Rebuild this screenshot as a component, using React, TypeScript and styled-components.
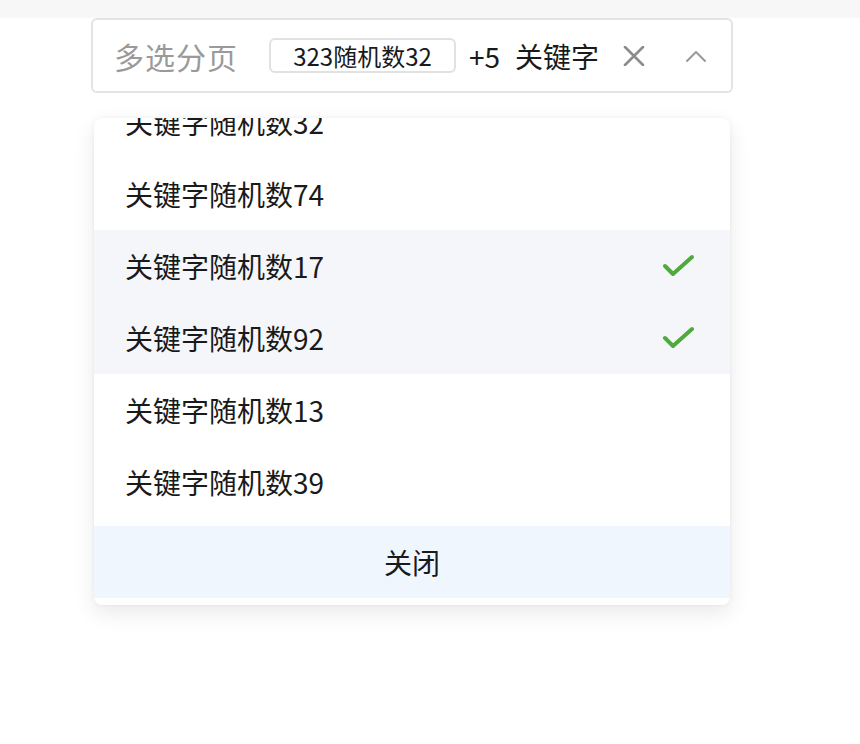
import { useEffect, useRef } from "react";
import styled, { createGlobalStyle } from "styled-components";

const GlobalStyle = createGlobalStyle`
  html, body {
    margin: 0;
    padding: 0;
    background: #ffffff;
    font-family: "Noto Sans CJK SC", "Noto Sans", sans-serif;
    color: #222;
  }
`;

const TopBand = styled.div`
  height: 18px;
  background: #f7f7f7;
`;

const Page = styled.div`
  padding: 0 0 0 91px;
  height: 726px;
`;

const SelectWrap = styled.div`
  position: relative;
  width: 642px;
`;

const SelectBox = styled.div`
  box-sizing: border-box;
  height: 75px;
  border: 2px solid #e3e3e3;
  border-radius: 6px;
  display: flex;
  align-items: center;
  padding: 0 24px 0 21px;
  background: #fff;
`;

const Placeholder = styled.span`
  font-size: 30px;
  color: #9a9a9a;
  letter-spacing: 1px;
  margin-right: 31px;
  white-space: nowrap;
`;

const Tag = styled.span`
  box-sizing: border-box;
  height: 35px;
  width: 187px;
  display: flex;
  align-items: center;
  justify-content: center;
  border: 2px solid #e1e1e1;
  border-radius: 6px;
  font-size: 24px;
  color: #1a1a1a;
  white-space: nowrap;
  margin-right: 13px;
`;

const Count = styled.span`
  font-size: 28px;
  color: #1a1a1a;
  margin-right: 15px;
  white-space: nowrap;
`;

const SearchText = styled.span`
  font-size: 28px;
  color: #1a1a1a;
  white-space: nowrap;
  flex: 1;
`;

const IconBtn = styled.span<{ $gap?: number }>`
  display: flex;
  align-items: center;
  justify-content: center;
  margin-left: ${(p) => p.$gap ?? 0}px;
`;

const Dropdown = styled.div`
  position: absolute;
  top: calc(100% + 25px);
  left: 3px;
  right: 3px;
  background: #fff;
  border-radius: 8px;
  box-shadow: 0 8px 22px rgba(0, 0, 0, 0.09), 0 0 4px rgba(0, 0, 0, 0.05);
  padding-bottom: 7px;
  overflow: hidden;
`;

const List = styled.div`
  height: 408px;
  overflow-y: auto;
  scrollbar-width: none;
  &::-webkit-scrollbar {
    display: none;
  }
`;

const Item = styled.div<{ $selected?: boolean }>`
  height: 72px;
  display: flex;
  align-items: center;
  justify-content: space-between;
  padding: 0 34px 0 31px;
  font-size: 28px;
  color: #1a1a1a;
  background: ${(p) => (p.$selected ? "#f4f6fa" : "#fff")};
`;

const CloseBar = styled.div`
  height: 72px;
  display: flex;
  align-items: center;
  justify-content: center;
  background: #f0f6fe;
  font-size: 28px;
  color: #1a1a1a;
`;

const items = [
  { label: "关键字随机数32", selected: false },
  { label: "关键字随机数74", selected: false },
  { label: "关键字随机数17", selected: true },
  { label: "关键字随机数92", selected: true },
  { label: "关键字随机数13", selected: false },
  { label: "关键字随机数39", selected: false },
  { label: "关键字随机数58", selected: false },
];

function Check() {
  return (
    <svg width="34" height="26" viewBox="0 0 34 26">
      <polyline
        points="3,13 11,21 30,4"
        fill="none"
        stroke="#4eaa3a"
        strokeWidth="4"
        strokeLinecap="round"
        strokeLinejoin="round"
      />
    </svg>
  );
}

export default function App() {
  const listRef = useRef<HTMLDivElement>(null);

  useEffect(() => {
    if (listRef.current) listRef.current.scrollTop = 32;
  }, []);

  return (
    <>
      <GlobalStyle />
      <TopBand />
      <Page>
        <SelectWrap>
          <SelectBox>
            <Placeholder>多选分页</Placeholder>
            <Tag>323随机数32</Tag>
            <Count>+5</Count>
            <SearchText>关键字</SearchText>
            <IconBtn>
              <svg width="22" height="20" viewBox="0 0 22 20">
                <path d="M2 1 L20 19 M20 1 L2 19" stroke="#8c8c8c" strokeWidth="2.6" strokeLinecap="round" />
              </svg>
            </IconBtn>
            <IconBtn $gap={40}>
              <svg width="22" height="14" viewBox="0 0 22 14">
                <path d="M2 12 L11 3 L20 12" fill="none" stroke="#9a9a9a" strokeWidth="2" strokeLinecap="round" strokeLinejoin="round" />
              </svg>
            </IconBtn>
          </SelectBox>
          <Dropdown>
            <List ref={listRef}>
              {items.map((it) => (
                <Item key={it.label} $selected={it.selected}>
                  <span>{it.label}</span>
                  {it.selected && <Check />}
                </Item>
              ))}
            </List>
            <CloseBar>关闭</CloseBar>
          </Dropdown>
        </SelectWrap>
      </Page>
    </>
  );
}
